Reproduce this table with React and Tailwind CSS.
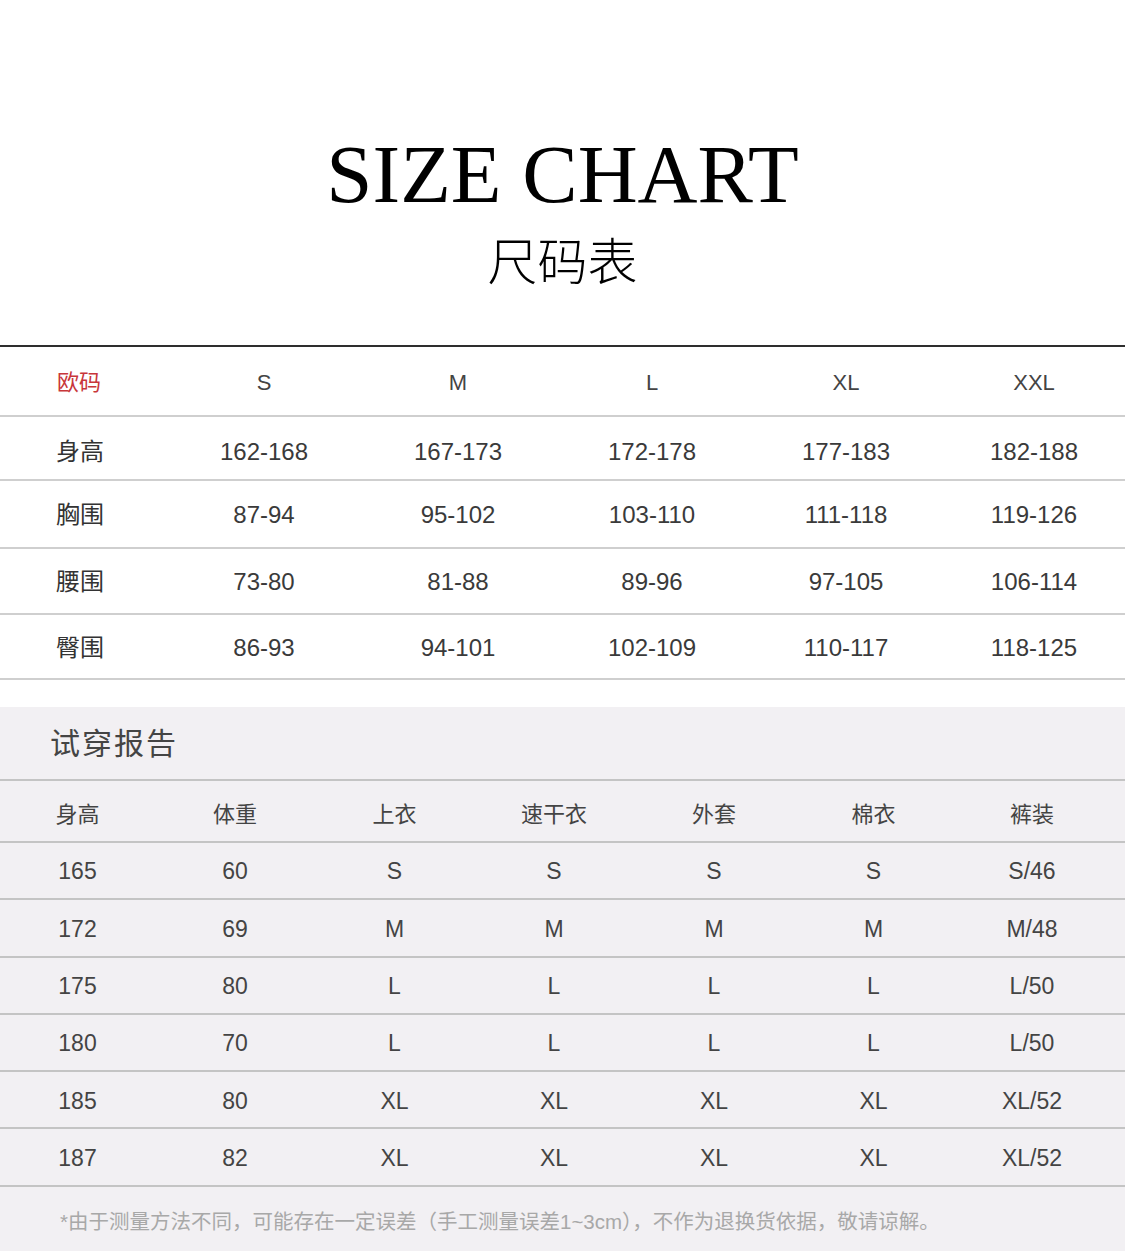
import React from "react";

const sans = { fontFamily: '"Liberation Sans", "Noto Sans CJK SC", sans-serif' };

const sizes = ["S", "M", "L", "XL", "XXL"];
const t1 = [
  { label: "身高", h: "h-[64px]", v: ["162-168", "167-173", "172-178", "177-183", "182-188"] },
  { label: "胸围", h: "h-[68px]", v: ["87-94", "95-102", "103-110", "111-118", "119-126"] },
  { label: "腰围", h: "h-[66px]", v: ["73-80", "81-88", "89-96", "97-105", "106-114"] },
  { label: "臀围", h: "h-[65px]", v: ["86-93", "94-101", "102-109", "110-117", "118-125"] },
];

const heads2 = ["身高", "体重", "上衣", "速干衣", "外套", "棉衣", "裤装"];
const t2 = [
  ["165", "60", "S", "S", "S", "S", "S/46"],
  ["172", "69", "M", "M", "M", "M", "M/48"],
  ["175", "80", "L", "L", "L", "L", "L/50"],
  ["180", "70", "L", "L", "L", "L", "L/50"],
  ["185", "80", "XL", "XL", "XL", "XL", "XL/52"],
  ["187", "82", "XL", "XL", "XL", "XL", "XL/52"],
];

const g1 = "grid grid-cols-[167px_194px_194px_194px_194px_1fr] items-center";
const g2 = "grid grid-cols-[155px_160px_159px_160px_160px_159px_158px_1fr] items-center";

export default function App() {
  return (
    <div className="w-[1125px] h-[1251px] bg-white overflow-hidden" style={sans}>
      <div className="h-[345px] flex flex-col items-center">
        <div
          className="mt-[133px] text-[83px] leading-none text-black"
          style={{ fontFamily: '"Liberation Serif", "DejaVu Serif", serif' }}
        >
          SIZE CHART
        </div>
        <div
          className="mt-[17px] text-[50px] leading-none text-black font-light"
          style={{ fontFamily: '"Noto Sans CJK SC", sans-serif' }}
        >
          尺码表
        </div>
      </div>
      <div className="border-t-2 border-[#2e2e2e]">
        <div className={`${g1} h-[70px] border-b-2 border-[#cfcfcf] text-[22px]`}>
          <div className="pl-[57px] pt-[3px] text-[#c8363a]">欧码</div>
          {sizes.map((s) => (
            <div key={s} className="text-center pt-[3px] text-[#444] font-light">{s}</div>
          ))}
        </div>
        {t1.map((r, ri) => (
          <div key={r.label} className={`${g1} ${r.h} border-b-2 border-[#cfcfcf]`}>
            <div className={`pl-[56px] text-[24px] text-[#333] ${ri === 0 ? "pt-[8px]" : "pt-[2px]"}`}>{r.label}</div>
            {r.v.map((v, i) => (
              <div key={i} className={`text-center text-[24px] text-[#3a3a3a] ${ri === 0 ? "pt-[8px]" : "pt-[2px]"}`}>{v}</div>
            ))}
          </div>
        ))}
      </div>
      <div className="h-[27px]" />
      <div className="bg-[#f2f0f3] h-[544px] flex flex-col">
        <div className="h-[74px] border-b-2 border-[#c4c4c4] flex items-center pl-[50px] text-[30px] text-[#444] tracking-[2px]">
          试穿报告
        </div>
        <div className={`${g2} h-[62px] border-b-2 border-[#c4c4c4] text-[22px] text-[#444]`}>
          {heads2.map((h) => (
            <div key={h} className="text-center pt-[6px]">{h}</div>
          ))}
        </div>
        {t2.map((r, ri) => (
          <div key={ri} className={`${g2} h-[57.3px] border-b-2 border-[#c4c4c4] text-[23px] text-[#444]`}>
            {r.map((c, i) => (
              <div key={i} className="text-center pt-[2px]">{c}</div>
            ))}
          </div>
        ))}
        <div className="flex-1 flex items-center pl-[60px] pt-[6px] text-[20.5px] text-[#a8a8a8]">
          *由于测量方法不同，可能存在一定误差（手工测量误差1~3cm），不作为退换货依据，敬请谅解。
        </div>
      </div>
    </div>
  );
}
